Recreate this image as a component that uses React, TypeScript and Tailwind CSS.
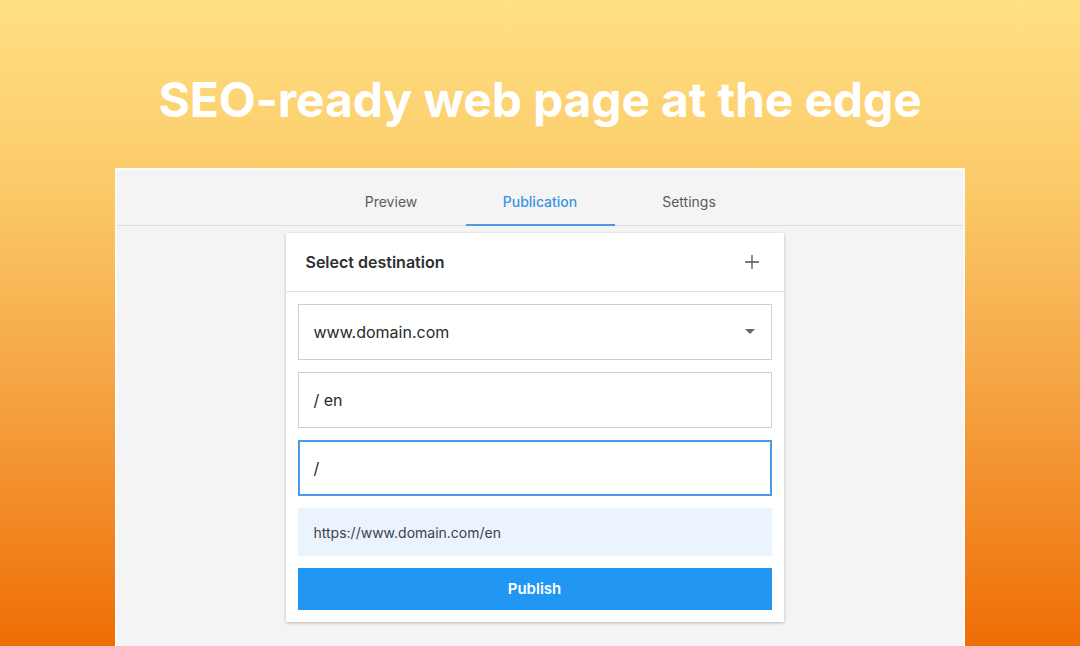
import { useState } from 'react';

const tabs = ['Preview', 'Publication', 'Settings'];

function PlusIcon() {
  return (
    <svg width="16" height="16" viewBox="0 0 16 16" className="text-[#555]">
      <path d="M8 1v14M1 8h14" stroke="currentColor" strokeWidth="1.3" />
    </svg>
  );
}

export default function App() {
  const [active, setActive] = useState('Publication');

  return (
    <div
      className="w-[1080px] h-[646px] overflow-hidden flex flex-col items-center bg-[linear-gradient(to_bottom,#ffe084_0%,#fbc967_30%,#f6aa4a_55%,#f28c28_78%,#ef6d05_100%)]"
      style={{ fontFamily: 'Inter, "Noto Sans", sans-serif' }}
    >
      <h1 className="mt-[70px] h-[60px] text-[48px] leading-[60px] font-bold text-white tracking-[-0.15px]">
        SEO-ready web page at the edge
      </h1>

      <div className="mt-[38px] w-[850px] flex-1 bg-[#f4f4f4] border-[2px] border-b-0 border-[#fbfbfb] flex flex-col">
        <div className="h-[56px] flex justify-center border-b border-[#dcdcdc]">
          {tabs.map(t => (
            <button
              key={t}
              onClick={() => setActive(t)}
              className={
                'w-[149px] h-full pt-[7px] text-[14px] relative ' +
                (active === t ? 'text-[#3b95e4] font-medium' : 'text-[#5c5c5c]')
              }
            >
              {t}
              {active === t && (
                <span className="absolute left-0 right-0 bottom-[-1px] h-[2px] bg-[#4a9be6]" />
              )}
            </button>
          ))}
        </div>

        <div className="flex justify-center pt-[7px] pr-[11px]">
          <div className="w-[498px] bg-white shadow-[0_1px_3px_rgba(0,0,0,0.25)]">
            <div className="h-[59px] flex items-center justify-between px-[20px] pr-[24px] border-b border-[#e0e0e0]">
              <span className="text-[16px] font-semibold text-[#2e2e2e]">Select destination</span>
              <PlusIcon />
            </div>

            <div className="px-[12px] pt-[12px] pb-[12px] flex flex-col gap-[12px]">
              <div className="h-[56px] border border-[#cfcfcf] flex items-center justify-between pl-[15px] pr-[16px]">
                <span className="text-[16px] text-[#2a2a2a]">www.domain.com</span>
                <svg width="10" height="6" viewBox="0 0 10 6">
                  <path d="M0 0h10L5 5z" fill="#666" />
                </svg>
              </div>

              <div className="h-[56px] border border-[#cfcfcf] flex items-center pl-[15px]">
                <span className="text-[16px] text-[#2a2a2a]">/ en</span>
              </div>

              <div className="h-[56px] border-2 border-[#4a9be6] flex items-center pl-[14px]">
                <span className="text-[16px] text-[#2a2a2a]">/</span>
              </div>

              <div className="h-[48px] bg-[#ebf3fd] flex items-center pl-[16px]">
                <span className="text-[14px] text-[#3c4250]">https://www.domain.com/en</span>
              </div>

              <button className="h-[42px] bg-[#2196f3] text-white text-[15px] font-semibold">
                Publish
              </button>
            </div>
          </div>
        </div>
      </div>
    </div>
  );
}
